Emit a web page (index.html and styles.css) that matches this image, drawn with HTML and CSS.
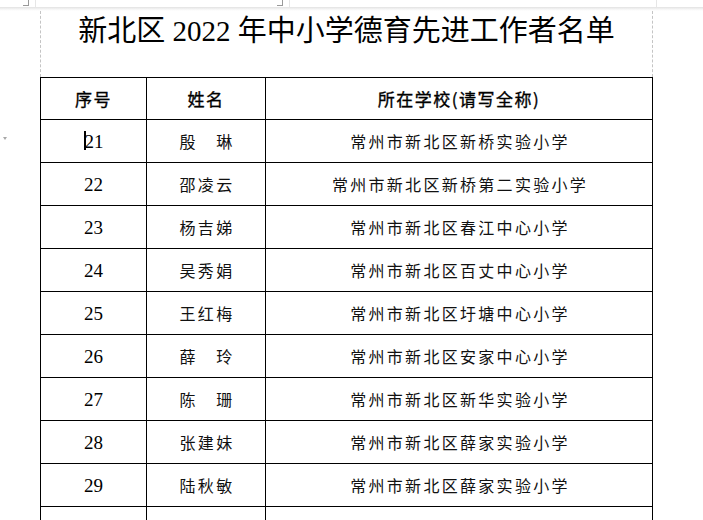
FILE: index.html
```html
<!DOCTYPE html>
<html lang="zh-CN">
<head>
<meta charset="utf-8">
<title>新北区 2022 年中小学德育先进工作者名单</title>
<link rel="stylesheet" href="styles.css">
</head>
<body>
<div class="topstrip">
  <span class="mark mark-a"></span>
  <span class="guide guide-a"></span>
  <span class="mark mark-b"></span>
  <span class="guide guide-b"></span>
  <span class="guide guide-c"></span>
</div>
<div class="shadow"></div>
<div class="page">
  <div class="titlebox">
    <h1 class="title">新北区 2022 年中小学德育先进工作者名单</h1>
  </div>
  <div class="grid">
    <div class="cell head">序号</div>
    <div class="cell head">姓名</div>
    <div class="cell head">所在学校(请写全称)</div>

    <div class="cell num first"><span class="rowmark"></span><span class="caret"></span>21</div>
    <div class="cell name">殷　琳</div>
    <div class="cell school">常州市新北区新桥实验小学</div>

    <div class="cell num">22</div>
    <div class="cell name">邵凌云</div>
    <div class="cell school">常州市新北区新桥第二实验小学</div>

    <div class="cell num">23</div>
    <div class="cell name">杨吉娣</div>
    <div class="cell school">常州市新北区春江中心小学</div>

    <div class="cell num">24</div>
    <div class="cell name">吴秀娟</div>
    <div class="cell school">常州市新北区百丈中心小学</div>

    <div class="cell num">25</div>
    <div class="cell name">王红梅</div>
    <div class="cell school">常州市新北区圩塘中心小学</div>

    <div class="cell num">26</div>
    <div class="cell name">薛　玲</div>
    <div class="cell school">常州市新北区安家中心小学</div>

    <div class="cell num">27</div>
    <div class="cell name">陈　珊</div>
    <div class="cell school">常州市新北区新华实验小学</div>

    <div class="cell num">28</div>
    <div class="cell name">张建妹</div>
    <div class="cell school">常州市新北区薛家实验小学</div>

    <div class="cell num">29</div>
    <div class="cell name">陆秋敏</div>
    <div class="cell school">常州市新北区薛家实验小学</div>

    <div class="cell num">30</div>
    <div class="cell name">吕艳萍</div>
    <div class="cell school">常州市新北区奔牛实验小学</div>
  </div>
</div>
</body>
</html>
```

FILE: styles.css
```css
html, body {
  margin: 0;
  padding: 0;
  background: #ffffff;
  overflow: hidden;
}

body {
  width: 703px;
  height: 520px;
  font-family: "Noto Sans CJK SC", sans-serif;
  color: #000;
}

.topstrip {
  position: relative;
  height: 7px;
  background: #ffffff;
}

.mark {
  position: absolute;
  top: 0;
  width: 5px;
  height: 5px;
  border-right: 1px solid #9a9a9a;
  border-bottom: 1px solid #9a9a9a;
}
.mark-a { left: 23px; }
.mark-b { left: 277px; }

.guide {
  position: absolute;
  top: 0;
  width: 1px;
  height: 7px;
  background: #e6e6e6;
}
.guide-a { left: 35px; }
.guide-b { left: 289px; }
.guide-c { left: 656px; }

.shadow {
  height: 4px;
  background: linear-gradient(#e2e2e2, #f6f6f6 60%, #ffffff);
}

.page {
  padding-left: 40px;
}

.titlebox {
  width: 613px;
  height: 66px;
  box-sizing: border-box;
  border-left: 1px dashed #c4c4c4;
  border-right: 1px dashed #c4c4c4;
}

.title {
  margin: 0;
  font-family: "Liberation Serif", "Noto Sans CJK SC", serif;
  font-weight: 400;
  font-size: 29px;
  line-height: 40px;
  text-align: center;
  color: #000;
}

.grid {
  display: grid;
  width: 613px;
  box-sizing: border-box;
  grid-template-columns: 106px 119px 387px;
  grid-template-rows: 42px;
  grid-auto-rows: 43px;
  border-top: 1px solid #000;
  border-left: 1px solid #000;
}

.cell {
  box-sizing: border-box;
  border-right: 1px solid #000;
  border-bottom: 1px solid #000;
  display: flex;
  align-items: center;
  justify-content: center;
  white-space: nowrap;
}

.head {
  font-size: 17px;
  font-weight: 400;
  letter-spacing: 1.5px;
  -webkit-text-stroke: 0.35px #000;
}

.num {
  font-family: "Liberation Serif", serif;
  font-size: 19px;
  padding-top: 1px;
}

.name, .school {
  font-size: 16px;
  font-weight: 400;
  letter-spacing: 2.3px;
  padding-left: 2px;
  color: #111;
}

.first {
  position: relative;
}

.caret {
  display: inline-block;
  width: 2px;
  height: 19px;
  background: #000;
  margin-right: -1px;
  margin-top: -2px;
}

.rowmark {
  position: absolute;
  left: -38px;
  top: 17px;
  width: 0;
  height: 0;
  border-left: 2.5px solid transparent;
  border-right: 2.5px solid transparent;
  border-top: 3px solid #a8a8a8;
}
```
